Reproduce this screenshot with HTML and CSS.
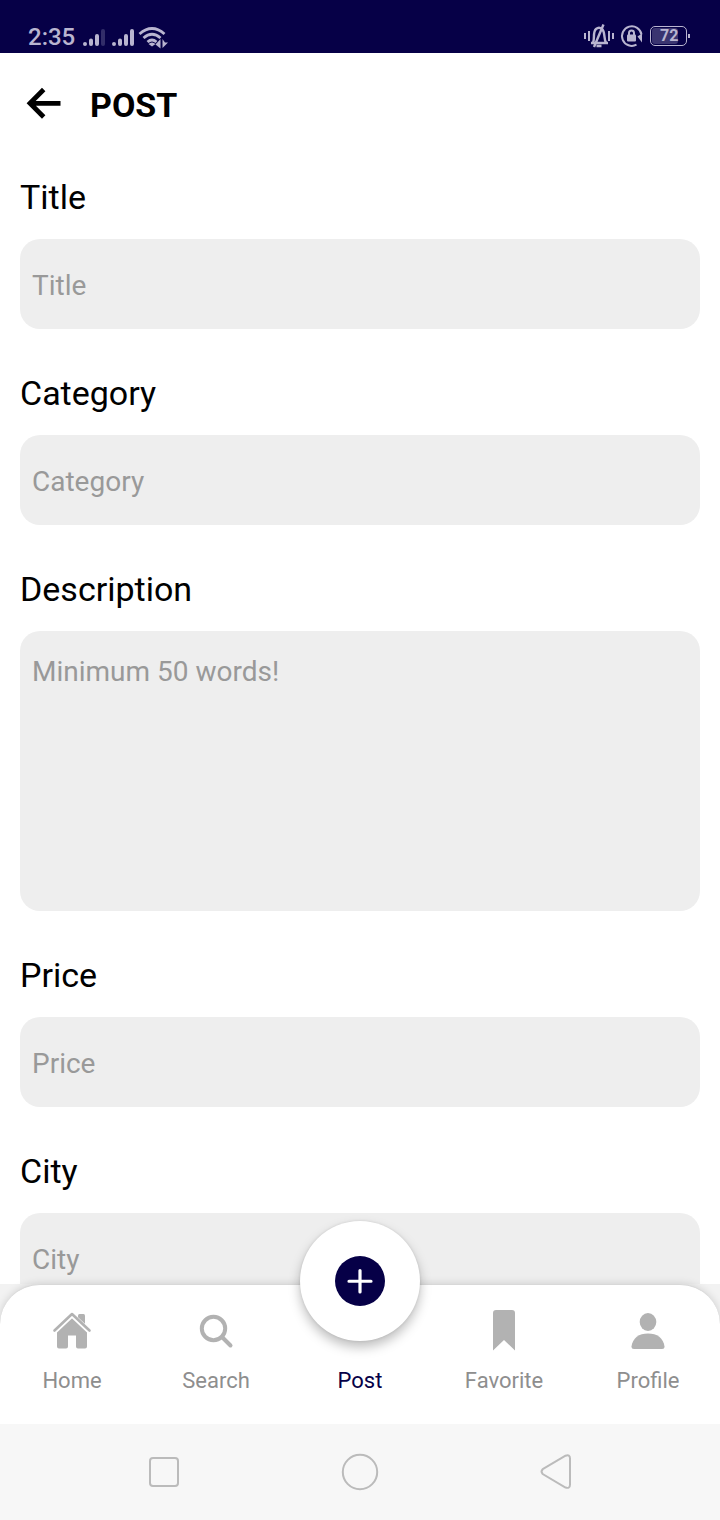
FILE: index.html
```html
<!DOCTYPE html>
<html lang="en">
<head>
<meta charset="utf-8">
<meta name="viewport" content="width=device-width, initial-scale=1">
<title>Post</title>
<link rel="stylesheet" href="styles.css">
</head>
<body>
<div class="status">
  <div class="status-group">
    <span class="clock">2:35</span>
    <svg class="signals" width="88" height="24" viewBox="0 0 88 24" fill="none" stroke="currentColor" stroke-width="4" stroke-linecap="round">
      <path d="M4 18v.1M10 14.500v3.600M16 10v8.100M33 18v.1M39 14.500v3.600M45 10v8.100M51 5v13.100"/>
      <path d="M22 5v13.100" opacity=".25"/>
      <g stroke-width="2.800" stroke-linecap="butt">
        <path d="M58.500 8Q71 -3 83.500 8M62.500 12Q71 4.500 79.500 12M66.500 16Q71 12 75.500 16"/>
      </g>
      <path d="M67.500 18q3.500-3 7 0L71 20.500z" fill="currentColor" stroke="none"/>
      <path d="M79.500 13v9.500L74.500 18.500zM81.500 13v9l5.500-5.500h-3z" fill="currentColor" stroke="none"/>
    </svg>
  </div>
  <div class="status-group">
    <svg width="30" height="24" viewBox="0 0 30 24" fill="none" stroke="currentColor" stroke-width="2">
      <path d="M1 9v6M5 7v10M25 7v10M29 9v6"/>
      <path d="M7 19h17M9 18.500C11 15 8.500 8 12 5q3-2.500 6 0c3.500 3 1.500 10 4 13.500M12.500 22h5M19.500 .5L10 23" stroke-width="2.400"/>
    </svg>
    <svg width="24" height="24" viewBox="0 0 24 24" fill="none" stroke="currentColor" stroke-width="2">
      <path d="M16.500 20.700A9.800 9.800 0 1 1 21.500 10.500"/>
      <path d="M17.500 12.500l4.500-3v9z" fill="currentColor" stroke="none"/>
      <rect x="7" y="10.500" width="9" height="7" rx="1" fill="currentColor" stroke="none"/>
      <path d="M9 11V9a2.500 2.500 0 0 1 5 0v2"/>
    </svg>
    <span class="battery"><span>72</span></span>
  </div>
</div>

<main class="screen">
  <header class="header">
    <button class="back" type="button" aria-label="Back">
      <svg width="36" height="36" viewBox="0 0 36 36" fill="none" stroke="currentColor" stroke-width="4.800">
        <path d="M18.700 4.500L5 18.300l13.700 13.700M5 18.300h30.500"/>
      </svg>
    </button>
    <h1 class="heading">POST</h1>
  </header>
  <form class="form">
    <div class="field">
      <label for="title">Title</label>
      <input id="title" type="text" placeholder="Title">
    </div>
    <div class="field">
      <label for="category">Category</label>
      <input id="category" type="text" placeholder="Category">
    </div>
    <div class="field">
      <label for="description">Description</label>
      <textarea id="description" placeholder="Minimum 50 words!"></textarea>
    </div>
    <div class="field">
      <label for="price">Price</label>
      <input id="price" type="text" placeholder="Price">
    </div>
    <div class="field">
      <label for="city">City</label>
      <input id="city" type="text" placeholder="City">
    </div>
  </form>
</main>

<div class="tabs-wrap">
  <nav class="tabs">
    <a class="tab" href="#home">
      <svg width="40" height="44" viewBox="0 0 40 44" fill="currentColor">
        <path d="M26 5.500q0-1.500 1.500-1.500h4q1.500 0 1.500 1.500V16l-7-6.500z"/>
        <path d="M5 20L20 6l15 14v16.500q0 2-2 2h-7q-2 0-2-2V25.500h-8v11q0 2-2 2H7q-2 0-2-2z"/>
        <path d="M2.500 21.500L20 5l17.500 16.500" fill="none" stroke="#fff" stroke-width="5"/>
        <path d="M2.500 20.500L20 4l17.500 16.500" fill="none" stroke="currentColor" stroke-width="2.600" stroke-linecap="round" stroke-linejoin="round"/>
      </svg>
      <span>Home</span>
    </a>
    <a class="tab" href="#search">
      <svg width="40" height="44" viewBox="0 0 40 44" fill="none" stroke="currentColor" stroke-width="4">
        <circle cx="17.500" cy="18.500" r="11.700"/>
        <path d="M26 27l8.500 8.500" stroke-linecap="round"/>
      </svg>
      <span>Search</span>
    </a>
    <a class="tab tab-active" href="#post" aria-current="page">
      <span class="fab">
        <svg width="50" height="50" viewBox="0 0 50 50">
          <circle cx="25" cy="25" r="25" fill="currentColor"/>
          <path d="M25 14.500v21.500M14 25.250h22" stroke="#fff" stroke-width="3.200" stroke-linecap="round"/>
        </svg>
      </span>
      <span>Post</span>
    </a>
    <a class="tab" href="#favorite">
      <svg width="40" height="44" viewBox="0 0 40 44" fill="currentColor">
        <path d="M9 3q0-3 3-3h16q3 0 3 3v37.500L20 30 9 40.500z"/>
      </svg>
      <span>Favorite</span>
    </a>
    <a class="tab" href="#profile">
      <svg width="40" height="44" viewBox="0 0 40 44" fill="currentColor">
        <ellipse cx="20" cy="12" rx="8.300" ry="9"/>
        <path d="M3.500 36.500C4.500 28 11 23.500 20 23.500S35.500 28 36.500 36.500q0 2.500-2.500 2.500H6q-2.500 0-2.500-2.500z"/>
      </svg>
      <span>Profile</span>
    </a>
  </nav>
</div>

<div class="system">
  <button type="button" aria-label="Recent apps">
    <svg width="40" height="40" viewBox="0 0 40 40"><rect x="6" y="6" width="28" height="28" rx="3"/></svg>
  </button>
  <button type="button" aria-label="Home screen">
    <svg width="40" height="40" viewBox="0 0 40 40"><circle cx="20" cy="20" r="17.200"/></svg>
  </button>
  <button type="button" aria-label="Go back">
    <svg width="40" height="40" viewBox="0 0 40 40"><path d="M6.700 17.200L29.500 3.700Q34 2 34 6.500V32.500Q34 37 29.500 35.500L6.700 22Q4.300 19.600 6.700 17.200z"/></svg>
  </button>
</div>
</body>
</html>
```
FILE: styles.css
```css
* {
  box-sizing: border-box;
}

body {
  display: flex;
  flex-direction: column;
  height: 100vh;
  margin: 0;
  background: #fff;
  color: #000;
  font-family: Roboto, "Liberation Sans", sans-serif;
}

button {
  display: flex;
  padding: 0;
  border: 0;
  background: none;
  color: inherit;
}

svg {
  display: block;
}

.status {
  display: flex;
  justify-content: space-between;
  padding: 20px 30px 0 28px;
  height: 53px;
  background: #060047;
  color: #b9b5d0;
}

.status-group {
  display: flex;
  align-items: center;
  gap: 6px;
  height: 32px;
}

.clock {
  padding-top: 2px;
  font-size: 24px;
  font-weight: 500;
}

.signals {
  margin-top: 4px;
}

.battery {
  position: relative;
  display: flex;
  width: 37px;
  height: 20px;
  margin-right: 3px;
  padding: 1px;
  border: 1px solid currentColor;
  border-radius: 5px;
}

.battery span {
  width: 26px;
  padding-left: 8px;
  border-radius: 3px;
  background: #3a3470;
  font-size: 16px;
  font-weight: 700;
  line-height: 16px;
}

.battery::after {
  content: "";
  position: absolute;
  top: 7px;
  right: -4px;
  width: 2px;
  height: 4px;
  background: currentColor;
}

.screen {
  flex: 1;
  min-height: 0;
  overflow: hidden;
}

.header {
  display: flex;
  align-items: center;
  gap: 29px;
  height: 104px;
  padding: 0 25px;
}

.back {
  margin-bottom: 4px;
}

.heading {
  margin: 0;
  font-size: 34px;
  font-weight: 700;
}

.form {
  display: flex;
  flex-direction: column;
  gap: 44px;
  padding: 20px;
}

.field {
  display: flex;
  flex-direction: column;
  gap: 22px;
}

.field label {
  font-size: 34px;
  line-height: 40px;
}

.field input,
.field textarea {
  display: block;
  width: 100%;
  height: 90px;
  padding: 2px 12px 0;
  border: 0;
  border-radius: 20px;
  background: #eee;
  color: #000;
  font: 28px Roboto, "Liberation Sans", sans-serif;
  resize: none;
}

.field textarea {
  height: 280px;
  padding: 24px 12px;
}

.field ::placeholder {
  color: #999;
  opacity: 1;
}

.tabs-wrap {
  background: #f2f2f2;
}

.tabs {
  position: relative;
  display: flex;
  height: 140px;
  border-radius: 40px 40px 0 0;
  border-top: 1px solid #d8d8d8;
  background: #fff;
  box-shadow: 0 0 8px rgba(0, 0, 0, 0.15);
}

.tab {
  flex: 1;
  display: flex;
  flex-direction: column;
  align-items: center;
  justify-content: space-between;
  padding: 25px 0 29px;
  color: #b2b2b2;
  font-size: 22px;
  line-height: 28px;
  text-decoration: none;
}

.tab span {
  color: #8e8e8e;
}

.tab-active {
  justify-content: flex-end;
}

.tab-active span {
  color: #060047;
}

.fab {
  position: absolute;
  bottom: 83px;
  display: grid;
  place-items: center;
  width: 120px;
  height: 120px;
  border-radius: 50%;
  background: #fff;
  box-shadow: 0 6px 12px rgba(0, 0, 0, 0.26), 0 0 3px rgba(0, 0, 0, 0.1);
}

.system {
  position: relative;
  display: flex;
  align-items: center;
  justify-content: space-between;
  height: 96px;
  padding: 0 20%;
  background: #f7f7f7;
}

.system svg {
  fill: none;
  stroke: #bbb;
  stroke-width: 2;
}
```
